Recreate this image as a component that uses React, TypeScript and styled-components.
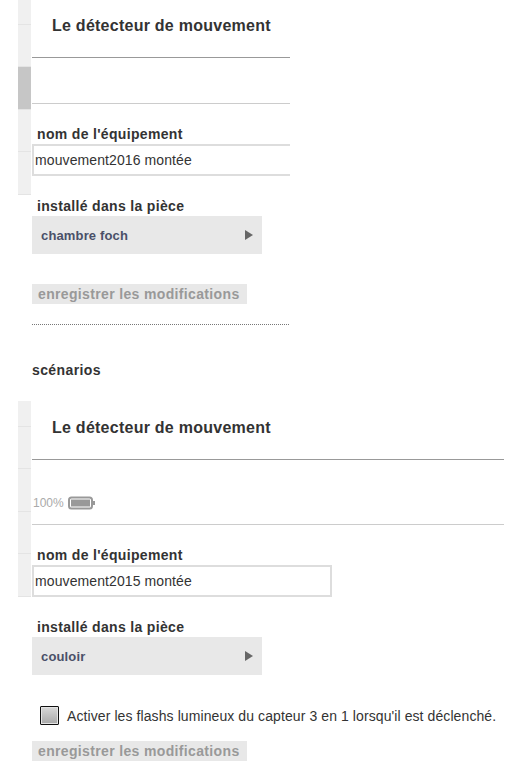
import styled, { createGlobalStyle } from 'styled-components'

const GlobalStyle = createGlobalStyle`
    html, body {
        margin: 0;
        padding: 0;
        background: #fff;
        font-family: 'Liberation Sans', Arial, sans-serif;
        color: #333;
    }
`

const Page = styled.div`
    width: 507px;
    height: 782px;
    overflow: hidden;
    display: flex;
    flex-direction: column;
`

const Device = styled.section<{ $top: number }>`
    display: flex;
    align-items: flex-start;
    gap: 1px;
    margin-left: 18px;
    margin-top: ${({ $top }) => $top}px;
`

const Rail = styled.div`
    flex: none;
    width: 13px;
    display: flex;
    flex-direction: column;
`

const RailCell = styled.div<{ $h: number; $thumb?: boolean }>`
    height: ${({ $h }) => $h}px;
    background: ${({ $thumb }) => ($thumb ? '#c6c6c6' : '#f0f0f0')};
    border-bottom: 1px solid #e4e4e4;
    box-sizing: border-box;
`

const Content = styled.div<{ $width: number; $offset?: number }>`
    width: ${({ $width }) => $width}px;
    margin-top: ${({ $offset }) => $offset ?? 0}px;
    display: flex;
    flex-direction: column;
`

const Title = styled.h2`
    margin: 0;
    height: 58px;
    padding: 17px 0 0 20px;
    box-sizing: border-box;
    font-size: 16px;
    line-height: 18px;
    font-weight: bold;
    letter-spacing: 0.25px;
    color: #333;
    border-bottom: 1px solid #999;
`

const Status = styled.div<{ $h: number }>`
    height: ${({ $h }) => $h}px;
    box-sizing: border-box;
    border-bottom: 1px solid #ccc;
    padding: 0 0 14px 1px;
    display: flex;
    align-items: flex-end;
    gap: 4px;
    font-size: 12px;
    line-height: 14px;
    color: #aaa;
`

const FieldLabel = styled.label`
    display: block;
    margin-top: 22px;
    padding-left: 5px;
    height: 17px;
    font-size: 14px;
    line-height: 17px;
    font-weight: bold;
    letter-spacing: 0.33px;
    color: #333;
`

const InputClip = styled.div`
    overflow: hidden;
    margin-top: 1px;
`

const NameInput = styled.input`
    display: block;
    width: 300px;
    height: 32px;
    box-sizing: border-box;
    border: 2px solid #ddd;
    padding: 0 1px;
    margin: 0;
    outline: none;
    background: #fff;
    font-family: inherit;
    font-size: 14px;
    letter-spacing: 0.1px;
    color: #333;
`

const RoomSelect = styled.div`
    width: 230px;
    height: 38px;
    margin-top: 1px;
    box-sizing: border-box;
    padding: 1px 9px 0;
    background: #e8e8e8;
    display: flex;
    align-items: center;
    justify-content: space-between;
    font-size: 13px;
    font-weight: bold;
    letter-spacing: 0.15px;
    color: #4a5068;
`

const Arrow = styled.span`
    width: 0;
    height: 0;
    margin-top: -1px;
    border-left: 8px solid #666;
    border-top: 5px solid transparent;
    border-bottom: 5px solid transparent;
`

const SaveButton = styled.button<{ $top: number }>`
    display: block;
    width: 215px;
    height: 20px;
    margin-top: ${({ $top }) => $top}px;
    padding: 0 0 0 6px;
    border: none;
    background: #e8e8e8;
    text-align: left;
    font-family: inherit;
    font-size: 14px;
    line-height: 20px;
    font-weight: bold;
    letter-spacing: 0.35px;
    color: #999;
`

const DottedRule = styled.div`
    margin-top: 20px;
    border-top: 1px dotted #777;
    width: 257px;
`

const SectionHeading = styled.div`
    margin-top: 37px;
    margin-left: 32px;
    height: 17px;
    font-size: 14px;
    line-height: 17px;
    font-weight: bold;
    letter-spacing: 0.4px;
    color: #333;
`

const OptionRow = styled.div`
    display: flex;
    align-items: center;
    gap: 8px;
    margin-top: 31px;
    margin-left: 8px;
    height: 19px;
    font-size: 14px;
    letter-spacing: 0.09px;
    white-space: nowrap;
    color: #333;
`

const Checkbox = styled.span`
    flex: none;
    width: 19px;
    height: 19px;
    box-sizing: border-box;
    border: 1px solid #111;
    background: linear-gradient(180deg, #d8d8d8 0%, #a8a8a8 100%);
    box-shadow: inset 0 0 0 1px #e4e4e4;
    border-radius: 1px;
`

const Battery = () => (
    <svg width="28" height="14" viewBox="0 0 28 14">
        <rect x="1" y="1.5" width="23" height="11" rx="2.5" fill="#fff" stroke="#999" strokeWidth="2" />
        <rect x="3" y="3.5" width="19" height="7" fill="#999" />
        <rect x="24.5" y="5" width="2.5" height="4" fill="#999" />
    </svg>
)

export default function App() {
    return (
        <Page>
            <GlobalStyle />
            <Device $top={0}>
                <Rail>
                    <RailCell $h={25} />
                    <RailCell $h={42} />
                    <RailCell $h={43} $thumb />
                    <RailCell $h={42} />
                    <RailCell $h={43} />
                </Rail>
                <Content $width={258}>
                    <Title>Le détecteur de mouvement</Title>
                    <Status $h={46} />
                    <FieldLabel>nom de l'équipement</FieldLabel>
                    <InputClip>
                        <NameInput readOnly value="mouvement2016 montée" />
                    </InputClip>
                    <FieldLabel>installé dans la pièce</FieldLabel>
                    <RoomSelect>
                        chambre foch
                        <Arrow />
                    </RoomSelect>
                    <SaveButton $top={30}>enregistrer les modifications</SaveButton>
                    <DottedRule />
                </Content>
            </Device>
            <SectionHeading>scénarios</SectionHeading>
            <Device $top={22}>
                <Rail>
                    <RailCell $h={26} />
                    <RailCell $h={42} />
                    <RailCell $h={43} />
                    <RailCell $h={42} />
                    <RailCell $h={43} />
                </Rail>
                <Content $width={472} $offset={1}>
                    <Title>Le détecteur de mouvement</Title>
                    <Status $h={65}>
                        100%
                        <Battery />
                    </Status>
                    <FieldLabel>nom de l'équipement</FieldLabel>
                    <InputClip>
                        <NameInput readOnly value="mouvement2015 montée" />
                    </InputClip>
                    <FieldLabel>installé dans la pièce</FieldLabel>
                    <RoomSelect>
                        couloir
                        <Arrow />
                    </RoomSelect>
                    <OptionRow>
                        <Checkbox />
                        Activer les flashs lumineux du capteur 3 en 1 lorsqu'il est déclenché.
                    </OptionRow>
                    <SaveButton $top={16}>enregistrer les modifications</SaveButton>
                </Content>
            </Device>
        </Page>
    )
}
